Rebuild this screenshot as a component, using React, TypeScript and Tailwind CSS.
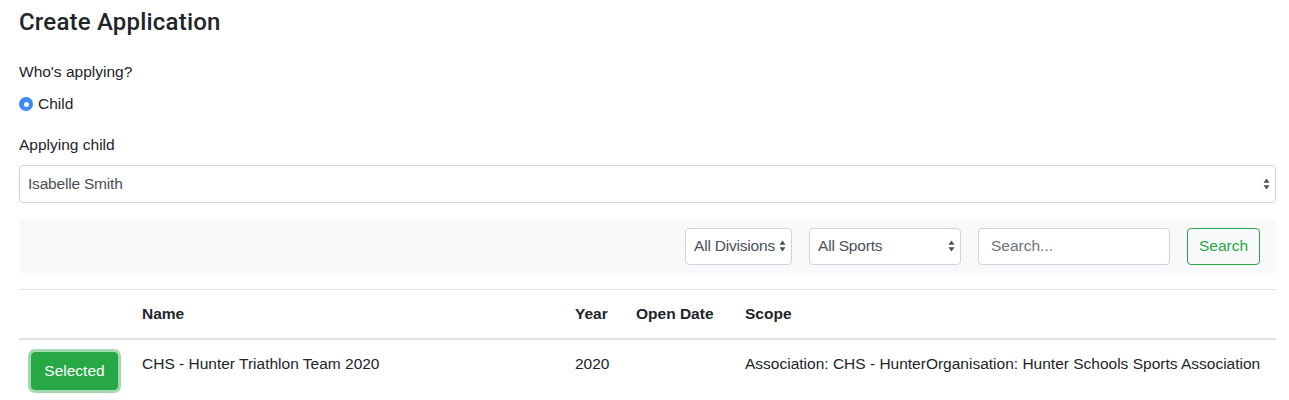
import React from "react";

const FONT = "font-['Liberation_Sans',Arial,sans-serif]";

function UpDown({ className = "" }: { className?: string }) {
  return (
    <svg viewBox="0 0 7 12" className={className} width="7" height="12" aria-hidden>
      <path d="M3.5 0.5 L6.5 4.8 L0.5 4.8 Z" fill="#4b4f55" />
      <path d="M3.5 11.5 L6.5 7.2 L0.5 7.2 Z" fill="#4b4f55" />
    </svg>
  );
}

function FakeSelect({ label, className }: { label: string; className: string }) {
  return (
    <div
      className={`relative flex h-[37px] items-center rounded-[4px] border border-[#ced4da] bg-white pl-[8px] text-[15.5px] text-[#495057] ${className}`}
    >
      <span className="tracking-[-0.2px]">{label}</span>
      <UpDown className="absolute right-[5px] top-1/2 -translate-y-1/2" />
    </div>
  );
}

export default function App() {
  return (
    <div className={`${FONT} min-h-[400px] bg-white pl-[19px] pr-[13px] pt-[8px] text-[15.5px] text-[#212529]`}>
      <h4 className="font-['Roboto',sans-serif] text-[24px] font-medium leading-[29px] tracking-[0.2px]">
        Create Application
      </h4>

      <p className="mt-[23px] leading-[24px]">Who's applying?</p>
      <label className="mt-[8px] flex items-center gap-[5px] leading-[24px]">
        <span className="flex h-[14px] w-[14px] items-center justify-center rounded-full bg-[#3d8bf7]">
          <span className="h-[5px] w-[5px] rounded-full bg-white" />
        </span>
        Child
      </label>

      <p className="mt-[17px] leading-[24px]">Applying child</p>
      <FakeSelect label="Isabelle Smith" className="mt-[8px] h-[38px] w-full" />

      <div className="mt-[16px] flex h-[54px] items-center justify-end gap-[17px] bg-[#f8f9fa] px-[16px]">
        <FakeSelect label="All Divisions" className="w-[107px]" />
        <FakeSelect label="All Sports" className="w-[152px]" />
        <div className="flex h-[37px] w-[192px] items-center rounded-[4px] border border-[#ced4da] bg-white pl-[12px] text-[#6c757d]">
          Search...
        </div>
        <button className="h-[37px] w-[73px] rounded-[4px] border border-[#28a745] text-[#28a745]">
          Search
        </button>
      </div>

      <table className="mt-[16px] w-full table-fixed border-collapse leading-[24px]">
        <colgroup>
          <col className="w-[111px]" />
          <col className="w-[433px]" />
          <col className="w-[61px]" />
          <col className="w-[109px]" />
          <col />
        </colgroup>
        <thead>
          <tr className="border-t border-[#dee2e6]">
            <th className="border-b-2 border-[#dee2e6] p-[12px] text-left font-bold"></th>
            <th className="border-b-2 border-[#dee2e6] p-[12px] text-left font-bold">Name</th>
            <th className="border-b-2 border-[#dee2e6] p-[12px] text-left font-bold">Year</th>
            <th className="whitespace-nowrap border-b-2 border-[#dee2e6] p-[12px] text-left font-bold">Open Date</th>
            <th className="border-b-2 border-[#dee2e6] p-[12px] text-left font-bold">Scope</th>
          </tr>
        </thead>
        <tbody>
          <tr>
            <td className="p-[12px] align-top">
              <button className="h-[38px] w-[87px] rounded-[4px] border border-[#28a745] bg-[#28a745] text-white shadow-[0_0_0_3px_rgba(72,180,97,0.5)]">
                Selected
              </button>
            </td>
            <td className="p-[12px] align-top">CHS - Hunter Triathlon Team 2020</td>
            <td className="p-[12px] align-top">2020</td>
            <td className="p-[12px] align-top"></td>
            <td className="whitespace-nowrap p-[12px] align-top">
              Association: CHS - HunterOrganisation: Hunter Schools Sports Association
            </td>
          </tr>
        </tbody>
      </table>
    </div>
  );
}
